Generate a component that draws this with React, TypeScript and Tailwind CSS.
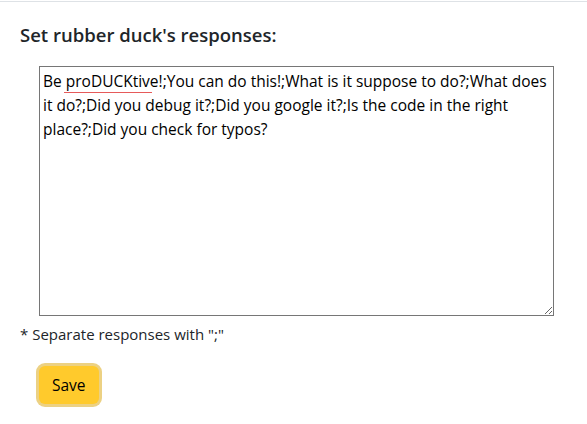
const responses =
  'Be proDUCKtive!;You can do this!;What is it suppose to do?;What does it do?;Did you debug it?;Did you google it?;Is the code in the right place?;Did you check for typos?';

export default function App() {
  return (
    <div className="min-h-[424px] w-full bg-white font-['Segoe_UI','Open_Sans',sans-serif] text-[#212529]">
      <div className="border-t border-[#dee2e6] mt-[1px]" />
      <div className="px-5 pt-[22px]">
        <h5 className="text-[18.5px] font-semibold leading-[1.2] mb-[20px]">Set rubber duck's responses:</h5>
        <div className="relative ml-[19px] w-[515px]">
          <textarea
            className="block w-[515px] h-[250px] border border-[#767676] px-[3px] py-[2px] text-[15.5px] leading-[24px] text-black outline-none resize-y"
            defaultValue={responses}
            spellCheck={false}
          />
          {/* spellcheck squiggle under "proDUCKtive" */}
          <svg className="absolute left-[25px] top-[25px] pointer-events-none" width="88" height="3" viewBox="0 0 88 3">
            <path d="M0 2 L1 1 L2 2 L3 1 L4 2 L5 1 L6 2 L7 1 L8 2 L9 1 L10 2 L11 1 L12 2 L13 1 L14 2 L15 1 L16 2 L17 1 L18 2 L19 1 L20 2 L21 1 L22 2 L23 1 L24 2 L25 1 L26 2 L27 1 L28 2 L29 1 L30 2 L31 1 L32 2 L33 1 L34 2 L35 1 L36 2 L37 1 L38 2 L39 1 L40 2 L41 1 L42 2 L43 1 L44 2 L45 1 L46 2 L47 1 L48 2 L49 1 L50 2 L51 1 L52 2 L53 1 L54 2 L55 1 L56 2 L57 1 L58 2 L59 1 L60 2 L61 1 L62 2 L63 1 L64 2 L65 1 L66 2 L67 1 L68 2 L69 1 L70 2 L71 1 L72 2 L73 1 L74 2 L75 1 L76 2 L77 1 L78 2 L79 1 L80 2 L81 1 L82 2 L83 1 L84 2 L85 1 L86 2 L87 1 L88 2" fill="none" stroke="#e03030" strokeWidth="0.8" />
          </svg>
        </div>
        <p className="mt-[6px] text-[15px] leading-[24px]">* Separate responses with ";"</p>
        <div className="mt-[20px] ml-[19px]">
          <button className="h-[38px] px-[13px] rounded-[6px] bg-[#ffca2c] text-[15.5px] text-black ring-[3px] ring-[#ecd183]">
            Save
          </button>
        </div>
      </div>
    </div>
  );
}
